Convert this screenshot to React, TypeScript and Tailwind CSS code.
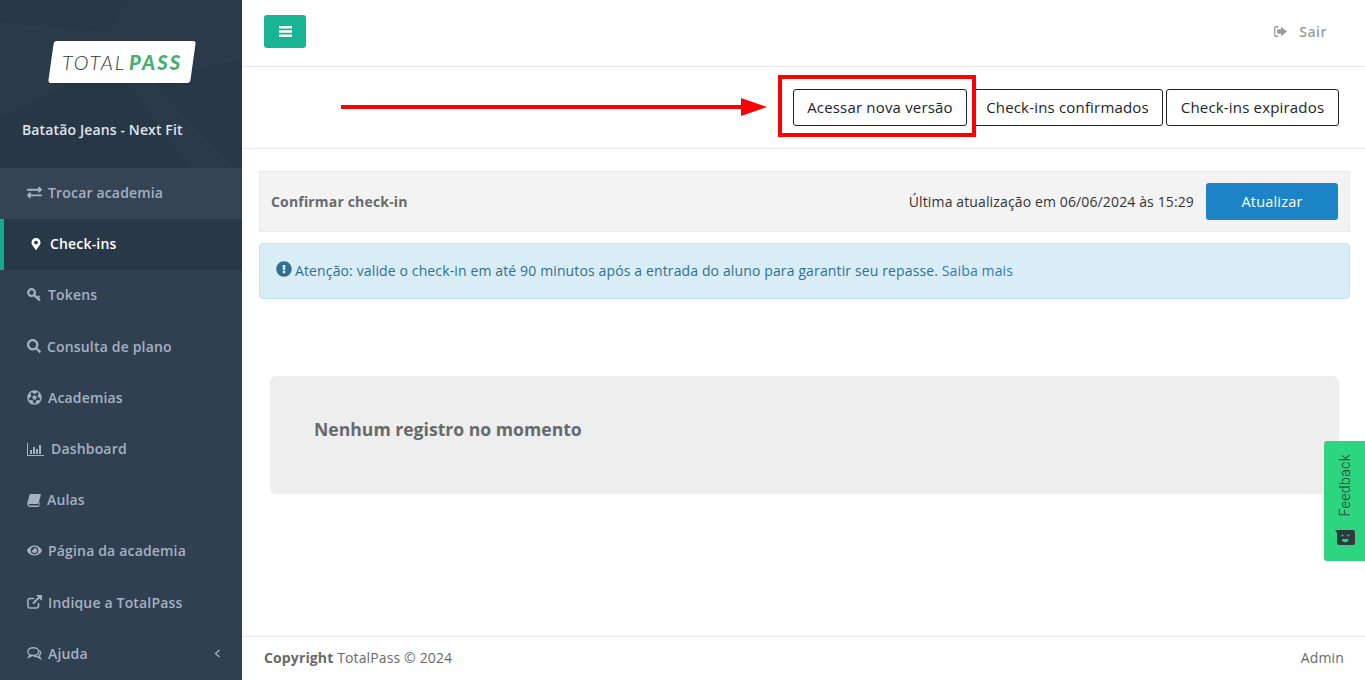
import { FaExchangeAlt, FaMapMarkerAlt, FaSearch, FaFutbol, FaEye, FaExclamationCircle } from 'react-icons/fa';
import type { ReactNode } from 'react';

const BarChartIcon = () => (
	<svg className="w-[17px] h-[14px]" viewBox="0 0 17 14" fill="currentColor">
		<path d="M0 1h1v12h16v1H0z" />
		<path d="M3 8h2v4H3zM6 5h2v7H6zM9 7h2v5H9zM12 3h2v9h-2z" />
	</svg>
);

const KeyIcon = () => (
	<svg className="w-[15px] h-[14px]" viewBox="0 0 15 14" fill="none" stroke="currentColor">
		<circle cx="4.6" cy="4.6" r="3.4" strokeWidth={2.2} />
		<path strokeWidth={2.2} d="M7 7l6 5.4" />
		<path strokeWidth={1.8} d="M10.5 10l2-2" />
	</svg>
);

const BookIcon = () => (
	<svg className="w-[14px] h-[14px]" viewBox="0 0 14 14" fill="currentColor">
		<path d="M3.6 1H13.5a.5.5 0 0 1 .4.6l-2.3 8.6a1 1 0 0 1-1 .8H2.6c-.6 0-.9.3-.9.7 0 .5.4.7.9.7h8.900l.8-3 .9-.2-1.2 4.400a.5.5 0 0 1-.5.4H2.400C1 13 .2 12.100.2 10.900c0-.3 0-.6.1-.9L2.500 2.100C2.700 1.400 3 1 3.600 1z" />
	</svg>
);

const ExternalIcon = () => (
	<svg className="w-[15px] h-[14px]" viewBox="0 0 15 14" fill="none" stroke="currentColor">
		<path strokeWidth={1.6} d="M11.5 8v3a2 2 0 0 1-2 2H3a2 2 0 0 1-2-2V5.500a2 2 0 0 1 2-2h4" />
		<path strokeWidth={1.8} d="M6 8.500 13 1.500" />
		<path fill="currentColor" stroke="none" d="M9 0h6v6z" />
	</svg>
);

const ChatIcon = () => (
	<svg className="w-[15px] h-[14px]" viewBox="0 0 15 14" fill="none" stroke="currentColor" strokeWidth={1.4}>
		<ellipse cx="6.300" cy="5.600" rx="5.500" ry="3.900" />
		<path d="M3 9 1.600 11.200 5 9.600" />
		<path d="M12.600 4.600c1.600 1.800 1.200 4-.6 5.200l1.400 2.600-3.600-1.800c-1.200.1-2.200-.1-3-.6" />
	</svg>
);

const SignOutIcon = () => (
	<svg className="w-[14px] h-[13px]" viewBox="0 0 13 12" fill="currentColor">
		<path d="M5 1H2.500A1.500 1.500 0 0 0 1 2.500v7A1.500 1.500 0 0 0 2.500 11H5V9.800H2.800a.6.6 0 0 1-.6-.6V2.800c0-.3.3-.6.6-.6H5z" />
		<path d="M7.500 1.500 13 6l-5.500 4.500V8H4V4h3.500z" />
	</svg>
);

const items: { label: string; icon: ReactNode; gap: string; active?: boolean; light?: boolean }[] = [
	{ label: 'Trocar academia', icon: <FaExchangeAlt size={15} />, gap: 'gap-[6px]', light: true },
	{ label: 'Check-ins', icon: <FaMapMarkerAlt size={12} className="-ml-[1px]" />, gap: 'gap-[8px]', active: true },
	{ label: 'Tokens', icon: <KeyIcon />, gap: 'gap-[6px]' },
	{ label: 'Consulta de plano', icon: <FaSearch size={14} />, gap: 'gap-[6px]' },
	{ label: 'Academias', icon: <FaFutbol size={15} />, gap: 'gap-[6px]' },
	{ label: 'Dashboard', icon: <BarChartIcon />, gap: 'gap-[7px]' },
	{ label: 'Aulas', icon: <BookIcon />, gap: 'gap-[6px]' },
	{ label: 'Página da academia', icon: <FaEye size={15} />, gap: 'gap-[6px]' },
	{ label: 'Indique a TotalPass', icon: <ExternalIcon />, gap: 'gap-[6px]' },
];

function Sidebar() {
	return (
		<aside className="w-[242px] h-[680px] flex-shrink-0 bg-[#2f4050] flex flex-col overflow-hidden">
			<div className="relative h-[168px] flex-shrink-0 bg-[#293846] overflow-hidden">
				<svg className="absolute inset-0 w-full h-full" viewBox="0 0 242 168">
					<path d="M0 22 110 32 130 0H242V60L150 80 235 168H190L110 60 0 120z" fill="#2a3a49" />
					<path d="M0 120 110 60 190 168H0z" fill="#283745" />
				</svg>
				<div className="relative pt-[41px] pl-[51px]">
					<div className="w-[142px] h-[42px] rounded-[3px] bg-white -skew-x-[8deg] flex items-center justify-center shadow-sm">
						<span className="text-[20px] italic font-light tracking-[1.8px] text-[#333] [font-family:Lato,sans-serif] skew-x-[8deg]">
							TOTAL
						</span>
						<span className="ml-[3px] text-[20px] italic font-black tracking-[2.2px] text-[#3fb06f] [font-family:Lato,sans-serif] skew-x-[8deg]">
							PASS
						</span>
					</div>
				</div>
				<div className="relative mt-[37px] pl-[22px] text-[14px] leading-[20px] font-semibold tracking-[0.13px] text-[#dfe4ed]">Batatão Jeans - Next Fit</div>
			</div>
			{items.map((item) => (
				<div
					key={item.label}
					className={
						item.active
							? 'h-[51.2px] flex-shrink-0 flex items-center pb-[2px] pl-[27px] border-l-4 border-[#19aa8d] bg-[#293846] text-white'
							: item.light
								? 'h-[51.2px] flex-shrink-0 flex items-center pb-[2px] pl-[27px] bg-[#344454] text-[#a7b1c2]'
								: 'h-[51.2px] flex-shrink-0 flex items-center pb-[2px] pl-[27px] text-[#a7b1c2]'
					}
				>
					<div className={`flex items-center ${item.gap} text-[14px] font-semibold tracking-[0.17px]`}>
						{item.icon}
						<span>{item.label}</span>
					</div>
				</div>
			))}
			<div className="h-[51.2px] flex-shrink-0 flex items-center justify-between pb-[2px] pl-[27px] pr-[21px] text-[#a7b1c2]">
				<div className="flex items-center gap-[6px] text-[14px] font-semibold tracking-[0.17px]">
					<ChatIcon />
					<span>Ajuda</span>
				</div>
				<svg className="w-[7px] h-[9px]" viewBox="0 0 7 9" fill="none" stroke="currentColor" strokeWidth={1.3}>
					<path d="M5.500 1 1.500 4.500 5.500 8" />
				</svg>
			</div>
		</aside>
	);
}

export default function App() {
	return (
		<div className="relative flex w-[1365px] h-[680px] overflow-hidden bg-white text-[#676a6c] tracking-[0.13px] [font-family:'Open_Sans',sans-serif]">
			<Sidebar />
			<main className="flex-1 flex flex-col min-w-0">
				<header className="h-[67px] flex-shrink-0 border-b border-[#e7eaec] flex items-center justify-between pl-[22px] pr-[38px] pb-[4px]">
					<button className="w-[42px] h-[33px] rounded-[3px] bg-[#1ab394] flex items-center justify-center text-white">
						<svg className="w-[13px] h-[11px]" viewBox="0 0 13 11" fill="currentColor">
							<path d="M0 0h13v2.500H0zM0 4.250h13v2.500H0zM0 8.500h13V11H0z" />
						</svg>
					</button>
					<div className="flex items-center gap-[12px] text-[14px] font-semibold tracking-[0.5px] text-[#999c9e]">
						<SignOutIcon />
						<span>Sair</span>
					</div>
				</header>
				<div className="h-[82px] flex-shrink-0 border-b border-[#e7eaec] flex items-center justify-end gap-[3px] pr-[26px] text-[15px] tracking-[0.18px] text-[#212529] pb-[1px]">
					<button className="w-[174px] h-[37px] mr-[2px] rounded-[3px] border border-[#222] bg-white">Acessar nova versão</button>
					<button className="w-[191px] h-[37px] rounded-[3px] border border-[#222] bg-white">Check-ins confirmados</button>
					<button className="w-[173px] h-[37px] rounded-[3px] border border-[#222] bg-white">Check-ins expirados</button>
				</div>
				<div className="pr-[15px] pl-[17px] pt-[22px] flex-1">
					<div className="h-[61px] border border-[#e7eaec] bg-[#f3f3f4] flex items-center justify-between px-[11px]">
						<span className="text-[14px] font-bold tracking-[0.17px] text-[#676a6c]">Confirmar check-in</span>
						<div className="flex items-center gap-[12px]">
							<span className="text-[14px] text-[#333]">Última atualização em 06/06/2024 às 15:29</span>
							<button className="w-[132px] h-[37px] rounded-[3px] bg-[#1c84c6] text-white text-[14.5px] font-medium tracking-[0.2px]">Atualizar</button>
						</div>
					</div>
					<div className="mt-[11px] h-[56px] pb-[2px] rounded-[4px] border border-[#bce8f1] bg-[#d9edf7] text-[#31708f] text-[14px] flex items-center pl-[16px] gap-[3px]">
						<FaExclamationCircle size={16} className="-mt-[2px]" />
						<span>
							Atenção: valide o check-in em até 90 minutos após a entrada do aluno para garantir seu repasse. <span className="text-[#337ab7]">Saiba mais</span>
						</span>
					</div>
					<div className="mt-[77px] mx-[11px] h-[118px] rounded-[6px] bg-[#eeeeee] pl-[44px] pt-[40px]">
						<h3 className="text-[17.6px] leading-[27px] font-bold tracking-normal text-[#676a6c]">Nenhum registro no momento</h3>
					</div>
				</div>
				<footer className="h-[44px] pb-[2px] flex-shrink-0 border-t border-[#e7eaec] flex items-center justify-between pl-[22px] pr-[21px] text-[14px]">
					<span>
						<strong className="font-bold">Copyright</strong> TotalPass © 2024
					</span>
					<span>Admin</span>
				</footer>
			</main>

			{/* annotation drawn over the page */}
			<div className="absolute left-[341px] top-[105px] w-[402px] h-[4px] bg-[#ff0000]" />
			<div className="absolute left-[741px] top-[98px] w-0 h-0 border-y-[9px] border-y-transparent border-l-[26px] border-l-[#ff0000]" />
			<div className="absolute left-[778px] top-[75px] w-[198px] h-[62px] border-[4px] border-[#ff0000]" />

			<div className="absolute left-[1324px] top-[441px] w-[41px] h-[120px] rounded-l-[3px] bg-[#2dd580] flex flex-col items-center justify-end pb-[16px] gap-[13px]">
				<span className="[writing-mode:vertical-rl] rotate-180 text-[14px] leading-[16px] text-[#333] [font-family:Roboto,sans-serif] font-light tracking-[0.4px]">
					Feedback
				</span>
				<svg className="w-[20px] h-[15px]" viewBox="0 0 20 15">
					<path d="M0 0h18a2 2 0 0 1 2 2v11a2 2 0 0 1-2 2H4a2 2 0 0 1-2-2V3z" fill="#2f3a3d" />
					<circle cx="7.500" cy="5.500" r="1" fill="#2dd580" />
					<circle cx="13.500" cy="5.500" r="1" fill="#2dd580" />
					<path d="M7 9h6.500a3.200 3.200 0 0 1-6.500 0z" fill="#2dd580" />
				</svg>
			</div>
		</div>
	);
}
